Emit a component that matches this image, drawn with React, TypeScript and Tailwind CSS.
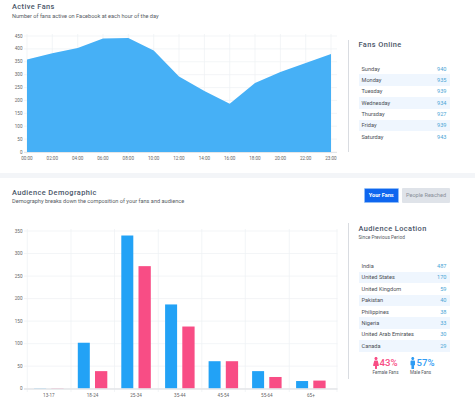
import React from "react";
import { FaFemale, FaMale } from "react-icons/fa";

const fans: [string, number, number][] = [
  ["00:00", 27, 58.5], ["02:00", 52.3, 52.3], ["04:00", 77.7, 47], ["06:00", 103, 37.5],
  ["08:00", 128.3, 37], ["10:00", 153.7, 49.5], ["12:00", 179, 75.5], ["14:00", 204.4, 90],
  ["16:00", 229.7, 102.7], ["18:00", 255, 82], ["20:00", 280.4, 71], ["22:00", 305.7, 62], ["23:00", 331, 53],
];
const fanTicks = [450, 400, 350, 300, 250, 200, 150, 100, 50, 0];
const online = [["Sunday", "940"], ["Monday", "935"], ["Tuesday", "939"], ["Wednesday", "934"], ["Thursday", "927"], ["Friday", "939"], ["Saturday", "943"]];
const locations = [["India", "487"], ["United States", "170"], ["United Kingdom", "59"], ["Pakistan", "40"], ["Philippines", "38"], ["Nigeria", "33"], ["United Arab Emirates", "30"], ["Canada", "29"]];
const demoTicks = [350, 300, 250, 200, 150, 100, 50, 0];
const demo: [string, number, number][] = [
  ["13-17", 1, 1], ["18-24", 102, 39], ["25-34", 340, 272], ["35-44", 187, 138],
  ["45-54", 61, 61], ["55-64", 39, 26], ["65+", 17, 18],
];

function FansChart() {
  const area = `M27,151 ` + fans.map(([, x, y]) => `L${x},${y}`).join(" ") + ` L331,151 Z`;
  return (
    <svg width="340" height="128" viewBox="0 32 340 128" className="block">
      {fans.map(([, x]) => <line key={x} x1={x} x2={x} y1="33" y2="153" stroke="#eef0f3" strokeWidth="0.7" />)}
      {fanTicks.map((t, i) => {
        const y = 35 + i * 12.89;
        return (
          <g key={t}>
            <line x1="24" x2="337" y1={y} y2={y} stroke="#eef0f3" strokeWidth="0.7" />
            <text x="22.5" y={y + 1.6} textAnchor="end" fontSize="4.6" fill="#666">{t}</text>
          </g>
        );
      })}
      <path d={area} fill="#46b0f6" />
      <line x1="24" x2="337" y1="151.5" y2="151.5" stroke="#e4e6e9" strokeWidth="1" />
      {fans.map(([l, x]) => <text key={l} x={x} y="158.6" textAnchor="middle" fontSize="4.6" fill="#666">{l}</text>)}
    </svg>
  );
}

function DemoChart() {
  const base = 380.7;
  const k = (380.7 - 223) / 350;
  const gx = [27.3, 71, 114.5, 158.3, 201.8, 245.3, 289.3];
  return (
    <svg width="340" height="172" viewBox="0 220 340 172" className="block">
      {[...gx, 337].map((x) => <line key={x} x1={x} x2={x} y1="221" y2="384" stroke="#eef0f3" strokeWidth="0.7" />)}
      {demoTicks.map((t) => {
        const y = base - t * k;
        return (
          <g key={t}>
            <line x1="24" x2="337.5" y1={y} y2={y} stroke="#eef0f3" strokeWidth="0.7" />
            <text x="22.5" y={y + 1.6} textAnchor="end" fontSize="4.6" fill="#666">{t}</text>
          </g>
        );
      })}
      {demo.map(([l, a, b], i) => (
        <g key={l}>
          <rect x={gx[i] + 6.8} y={base - a * k} width="12" height={a * k} fill="#22a2f6" />
          <rect x={gx[i] + 24} y={base - b * k} width="12.3" height={b * k} fill="#f84d85" />
          <text x={gx[i] + 21.6} y="388.6" textAnchor="middle" fontSize="4.6" fill="#666">{l}</text>
        </g>
      ))}
      <line x1="24" x2="337.5" y1="381" y2="381" stroke="#e4e6e9" strokeWidth="1.4" />
    </svg>
  );
}

function Rows({ rows }: { rows: string[][] }) {
  return (
    <div className="w-[91px]">
      {rows.map(([a, b], i) => (
        <div key={a} className={`flex h-[11.4px] items-center justify-between px-[3px] text-[5.6px] ${i % 2 === 1 ? "bg-[#eff6fe]" : ""}`}>
          <span className="text-[#4b4f55]">{a}</span>
          <span className="text-[#4ba6d6]">{b}</span>
        </div>
      ))}
    </div>
  );
}

export default function App() {
  return (
    <div className="h-[400px] w-[475px] overflow-hidden bg-white font-['Roboto',sans-serif]">
      <section className="flex h-[172.5px]">
        <div className="w-[348px] shrink-0">
          <div className="pl-[12px] pt-[1px]">
            <h2 className="text-[7.4px] font-medium leading-[9px] mt-[0.5px] tracking-[0.4px] text-[#4a5568]">Active Fans</h2>
            <p className="mt-[2px] text-[5.6px] leading-[7px] text-[#555b63]">Number of fans active on Facebook at each hour of the day</p>
          </div>
          <div className="mt-[13px]"><FansChart /></div>
        </div>
        <div className="mt-[40px] h-[112px] border-l border-[#d9dce1] pl-[9.5px]">
          <h3 className="text-[7.4px] font-medium leading-[9px] tracking-[0.4px] text-[#4a5568]">Fans Online</h3>
          <div className="mt-[14px]"><Rows rows={online} /></div>
        </div>
      </section>
      <div className="h-[5.5px] bg-[#f3f5f8]" />
      <section className="flex h-[222px]">
        <div className="w-[348px] shrink-0">
          <div className="pl-[12px] pt-[9.5px]">
            <h2 className="text-[7.4px] font-medium leading-[9px] tracking-[0.4px] text-[#4a5568]">Audience Demographic</h2>
            <p className="mt-[1.5px] text-[5.6px] leading-[7px] text-[#555b63]">Demography breaks down the composition of your fans and audience</p>
          </div>
          <div className="mt-[23px]"><DemoChart /></div>
        </div>
        <div className="relative flex-1">
          <div className="absolute left-[16px] top-[10px] flex gap-[3.5px]">
            <button className="h-[14.5px] w-[34.5px] rounded-[1px] border border-[#8fbcf7] bg-[#0f66ef] text-[5.6px] font-bold text-white">Your Fans</button>
            <button className="h-[14.5px] w-[48px] rounded-[1px] bg-[#dfe3e9] text-[5.6px] text-[#8a9099]">People Reached</button>
          </div>
          <div className="ml-0 mt-[45px] h-[156px] border-l border-[#d9dce1] pl-[9.5px]">
            <h3 className="pt-[0.5px] text-[7.4px] font-medium leading-[9px] tracking-[0.4px] text-[#4a5568]">Audience Location</h3>
            <p className="mt-[2px] text-[4.8px] leading-[6px] text-[#555b63]">Since Previous Period</p>
            <div className="mt-[20px]"><Rows rows={locations} /></div>
            <div className="mt-[5px] flex pl-[14px]">
              <div className="w-[37.5px]">
                <div className="flex items-center text-[#f84d85]">
                  <FaFemale className="h-[12px] w-[6px] shrink-0" style={{ transform: "scaleX(1.05)" }} />
                  <span className="ml-[1px] text-[9.6px] leading-[12px] font-medium">43%</span>
                </div>
                <p className="mt-[1.5px] text-[4.6px] leading-[6px] text-[#555b63]">Female Fans</p>
              </div>
              <div>
                <div className="flex items-center text-[#2f9cf4]">
                  <FaMale className="h-[12px] w-[5.5px] shrink-0" />
                  <span className="ml-[1px] text-[9.6px] leading-[12px] font-medium">57%</span>
                </div>
                <p className="mt-[1.5px] text-[4.6px] leading-[6px] text-[#555b63]">Male Fans</p>
              </div>
            </div>
          </div>
        </div>
      </section>
    </div>
  );
}
